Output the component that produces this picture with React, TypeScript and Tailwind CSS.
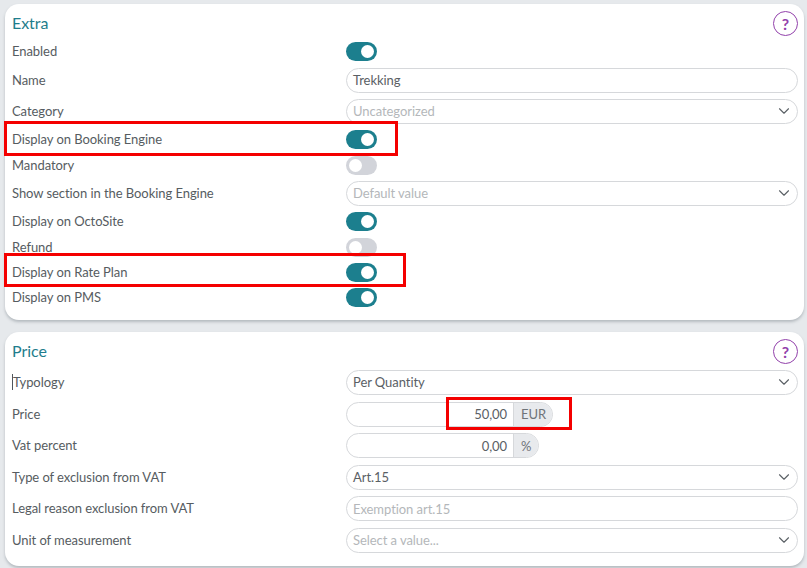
import React from 'react';
import { ChevronDown } from 'lucide-react';

const Toggle = ({ on }: { on?: boolean }) => (
  <div className={`flex h-[19px] w-[31px] items-center rounded-full px-[3px] ${on ? 'justify-end bg-[#1c7f8e]' : 'justify-start bg-[#d2d4da]'}`}>
    <div className="h-[13px] w-[13px] rounded-full bg-white" />
  </div>
);

const HelpIcon = () => (
  <div className="mt-[7px] flex h-[25px] w-[25px] items-center justify-center rounded-full border border-[#9241ab] text-[16px] font-bold text-[#9241ab]">?</div>
);

const Field = ({ text, placeholder, select }: { text?: string; placeholder?: string; select?: boolean }) => (
  <div className="flex h-[25px] w-[452px] items-center justify-between rounded-full border border-[#d6d8db] bg-white pl-[6px] pr-[4px]">
    <span className={`pt-[2px] ${text ? 'text-[#5a6065]' : 'text-[#b4b7ba]'}`}>{text ?? placeholder}</span>
    {select && <ChevronDown strokeWidth={1.5} className="h-[18px] w-[18px] text-[#5b6166]" />}
  </div>
);

const Amount = ({ value, unit, width }: { value: string; unit: string; width: string }) => (
  <div className={`flex h-[25px] items-stretch overflow-hidden rounded-full border border-[#d6d8db] bg-white ${width}`}>
    <div className="flex w-[166px] items-center justify-end pr-[6px] pt-[2px] text-[#5a6065]">{value}</div>
    <div className="flex flex-1 items-center border-l border-[#d6d8db] bg-[#e8eaed] pl-[7px] pt-[2px] text-[#6f7479]">{unit}</div>
  </div>
);

const Row = ({ label, h, tight, children }: { label: React.ReactNode; h: string; tight?: boolean; children: React.ReactNode }) => (
  <div className={`flex items-center ${h}`}>
    <div className={`w-[334px] text-[#565c61] ${tight ? 'pt-0' : 'pt-[2px]'}`}>{label}</div>
    {children}
  </div>
);

const Card = ({ title, children, className = '' }: { title: string; children: React.ReactNode; className?: string }) => (
  <section className={`rounded-[14px] bg-white pb-[10px] pl-[7px] pr-[6px] shadow-[0_2px_3px_rgba(90,100,110,0.35)] ${className}`}>
    <div className="flex h-[34px] items-start justify-between">
      <h2 className="pt-[7px] text-[16px] leading-[24px] text-[#1f7d8c]">{title}</h2>
      <HelpIcon />
    </div>
    {children}
  </section>
);

// red annotation boxes drawn on top of the form
const Mark = ({ className }: { className: string }) => (
  <div className={`absolute border-[3px] border-[#f40000] ${className}`} />
);

export default function App() {
  return (
    <div className="relative h-[568px] w-[807px] overflow-hidden bg-[#e6e9ec] pl-[5px] pr-[3px] pt-[4px] font-['Lato','Liberation_Sans',sans-serif] text-[13px] tracking-[-0.06px]">
      <Card title="Extra">
        <Row label="Enabled" h="h-[26px]"><Toggle on /></Row>
        <Row label="Name" h="h-[32px]"><Field text="Trekking" /></Row>
        <Row label="Category" h="h-[30px]"><Field placeholder="Uncategorized" select /></Row>
        <Row label="Display on Booking Engine" h="h-[26px]"><Toggle on /></Row>
        <Row label="Mandatory" h="h-[26px]"><Toggle /></Row>
        <Row label="Show section in the Booking Engine" h="h-[30px]"><Field placeholder="Default value" select /></Row>
        <Row label="Display on OctoSite" h="h-[26px]"><Toggle on /></Row>
        <Row label="Refund" h="h-[26px]"><Toggle /></Row>
        <Row label="Display on Rate Plan" h="h-[24px]"><Toggle on /></Row>
        <Row label="Display on PMS" h="h-[26px]"><Toggle on /></Row>
      </Card>

      <Card title="Price" className="mt-[12px]">
        <Row
          label={<span className="border-l border-[#50565b]">Typology</span>}
          h="h-[32px]"
        >
          <Field text="Per Quantity" select />
        </Row>
        <Row label="Price" h="h-[32px]"><Amount value="50,00" unit="EUR" width="w-[207px]" /></Row>
        <Row label="Vat percent" h="h-[31px]" tight><Amount value="0,00" unit="%" width="w-[193px]" /></Row>
        <Row label="Type of exclusion from VAT" h="h-[32px]"><Field text="Art.15" select /></Row>
        <Row label="Legal reason exclusion from VAT" h="h-[31px]" tight><Field placeholder="Exemption art.15" /></Row>
        <Row label="Unit of measurement" h="h-[32px]"><Field placeholder="Select a value..." select /></Row>
      </Card>

      <Mark className="left-[4px] top-[121px] h-[35px] w-[394px]" />
      <Mark className="left-[4px] top-[253px] h-[34px] w-[402px]" />
      <Mark className="left-[446px] top-[397px] h-[33px] w-[126px]" />
    </div>
  );
}
